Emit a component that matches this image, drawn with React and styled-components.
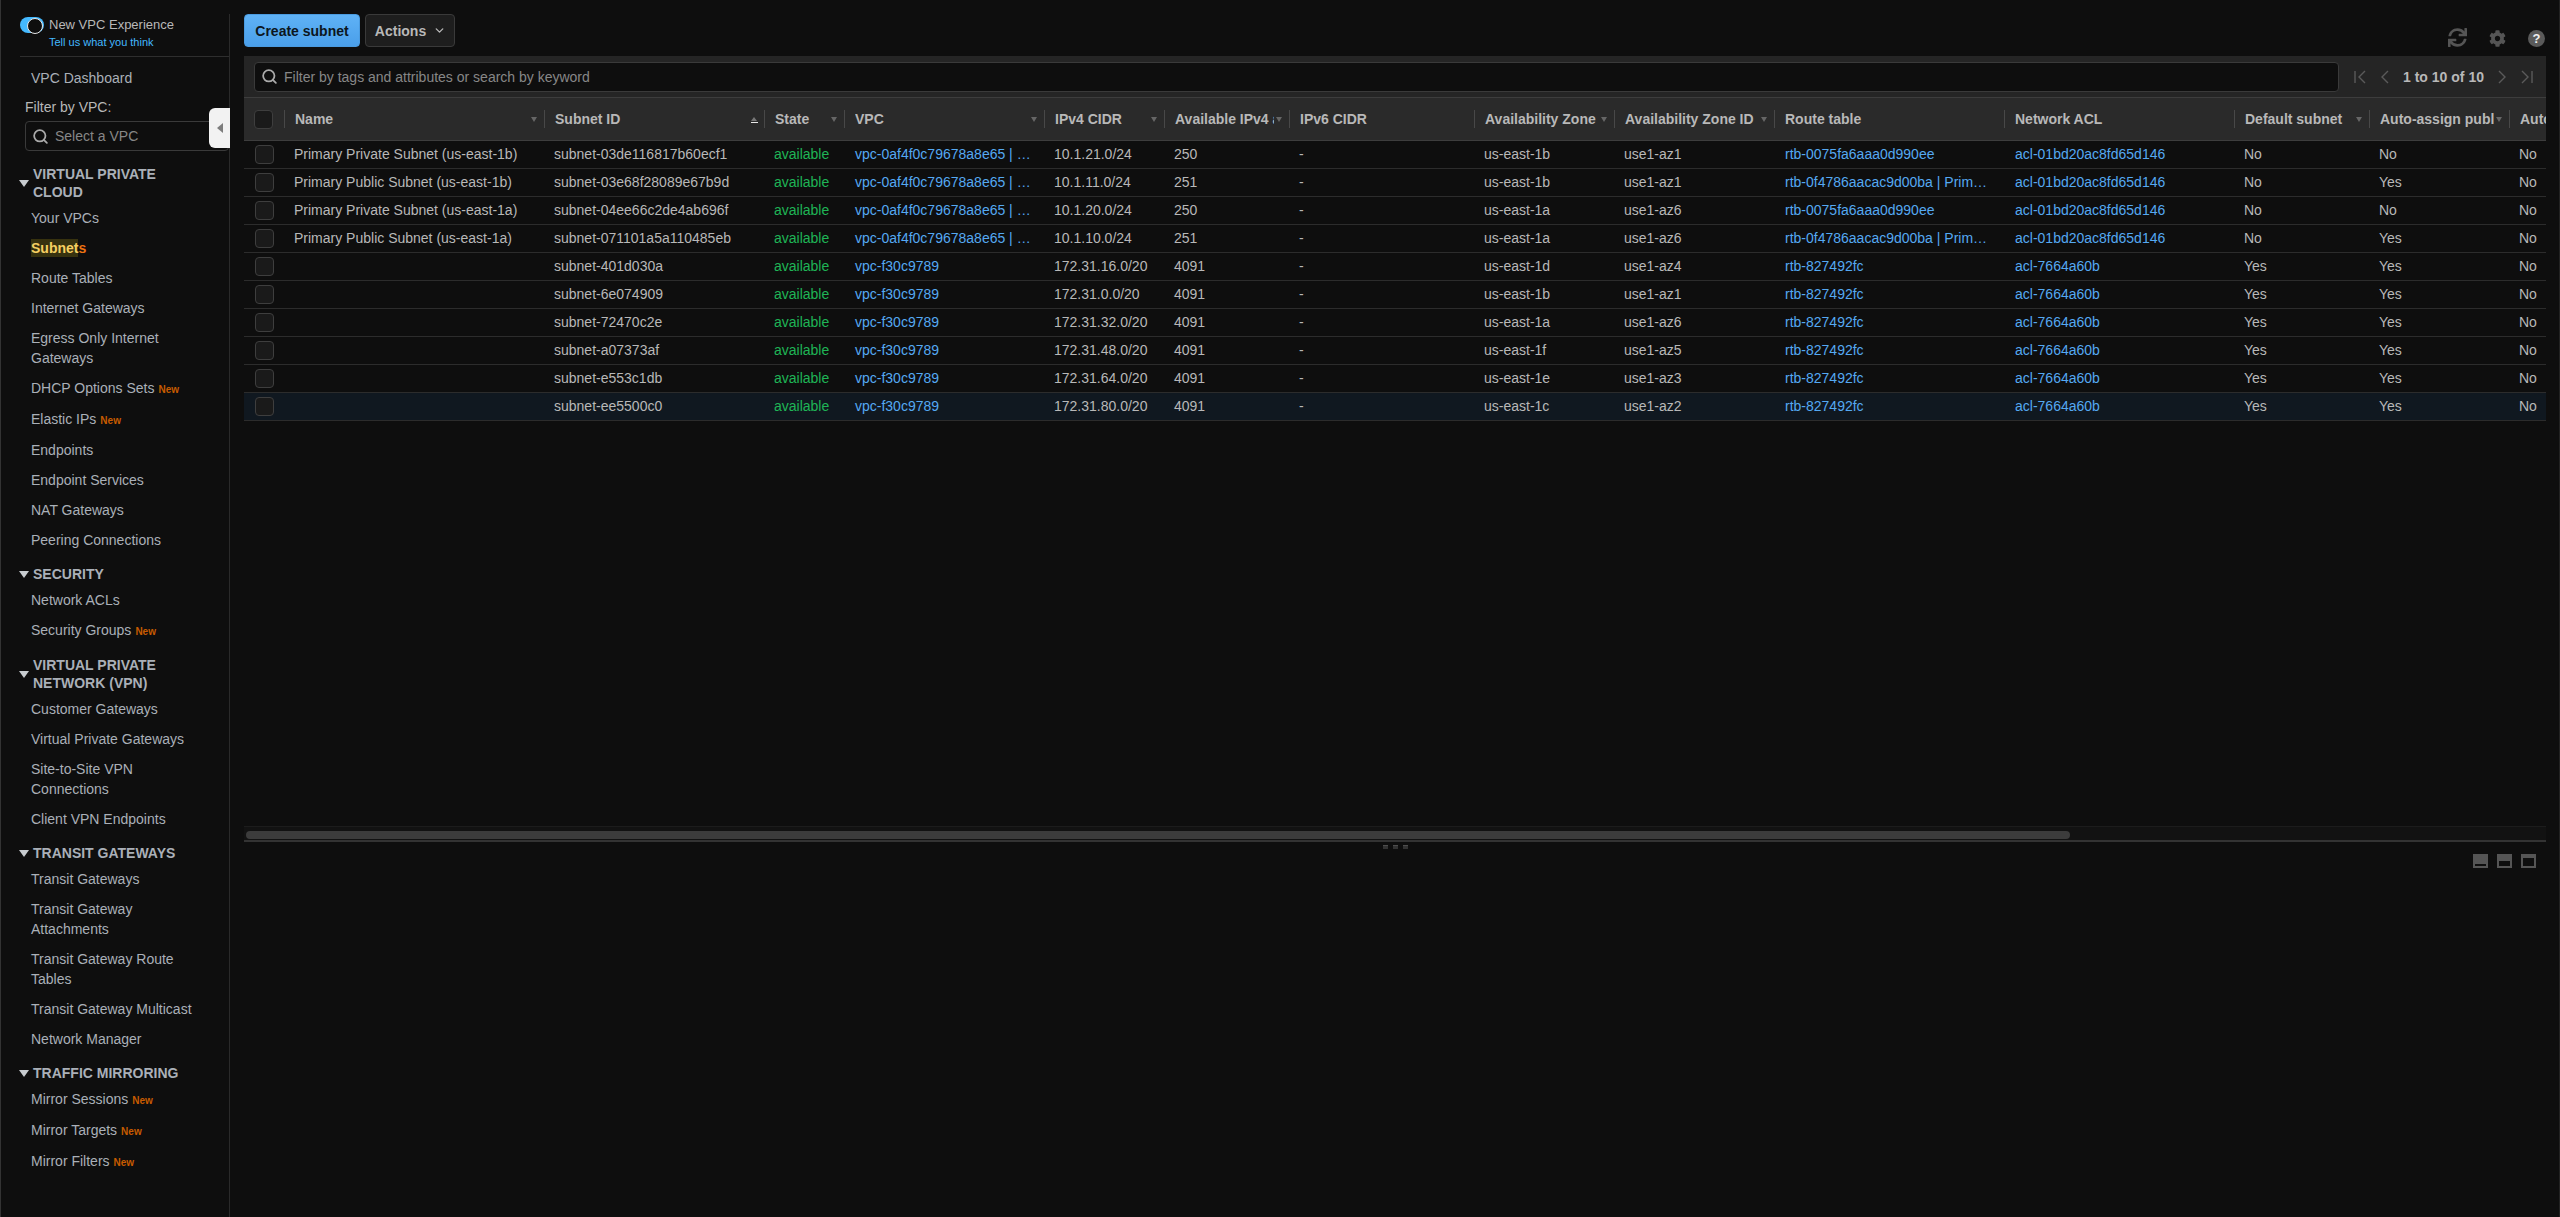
import React from 'react'
import styled, { createGlobalStyle } from 'styled-components'
import { Search, ChevronDown } from 'lucide-react'
import { FaSync, FaCog } from 'react-icons/fa'

const GlobalStyle = createGlobalStyle`
  html, body { margin: 0; height: 100%; background: #0e0e0e; overflow: hidden; }
  #root { height: 100%; }
  * { box-sizing: border-box; }
  body { font-family: "Liberation Sans", Arial, sans-serif; font-size: 14px; color: #b8b8b8; }
`

const columns = '40px 260px 220px 80px 200px 120px 125px 185px 140px 160px 230px 230px 135px 140px 200px'

const Page = styled.div`
  display: flex;
  height: 100%;
  border-left: 1px solid #333;
  border-right: 1px solid #222;
`
const Sidebar = styled.aside`
  position: relative;
  flex: 0 0 229px;
  margin-top: 14px;
  padding-left: 19px;
  border-right: 1px solid #2a2a2a;
`
const ToggleRow = styled.div`
  height: 43px;
  display: flex;
  gap: 5px;
  padding-top: 3px;
  margin-bottom: 6px;
  border-bottom: 1px solid #2e2e2e;
`
const Toggle = styled.div`
  width: 24px;
  height: 16px;
  border-radius: 8px;
  background: #44b9ff;
  position: relative;
  &::after {
    content: '';
    position: absolute;
    right: 1px;
    top: 1px;
    width: 14px;
    height: 14px;
    border: 1px solid #e8e8e8;
    border-radius: 50%;
    background: #0e0e0e;
  }
`
const ToggleText = styled.div`
  font-size: 13px;
  line-height: 15px;
  color: #b8b8b8;
`
const TellUs = styled.a`
  display: block;
  font-size: 11px;
  line-height: 13px;
  margin-top: 4px;
  color: #44b9ff;
`
const NavItem = styled.div`
  width: 182px;
  padding: ${p => (p.$isNew ? '5px 0 6px 11px' : '5px 0 5px 11px')};
  line-height: 20px;
  color: #aab0b8;
  font-weight: ${p => (p.$active ? 700 : 400)};
`
const NewBadge = styled.span`
  font-size: 10px;
  line-height: 1;
  font-weight: 700;
  color: #c75b00;
  margin-left: 4px;
`
const Highlight = styled.span`
  background: #37320f;
  color: #f5cf62;
  padding: 1px 0;
`
const ActiveEnd = styled.span`
  color: #ec7211;
`
const FilterLabel = styled.div`
  margin: 4px 0 4px 5px;
  line-height: 20px;
  color: #b8b8b8;
`
const VpcSelect = styled.div`
  margin-left: 5px;
  height: 30px;
  display: flex;
  align-items: center;
  gap: 6px;
  padding-left: 6px;
  border: 1px solid #3a3a3a;
  border-radius: 4px;
  color: #878787;
`
const Section = styled.div`
  margin-top: ${p => p.$top || 10}px;
`
const SectionHead = styled.div`
  display: flex;
  align-items: center;
  gap: 4px;
  margin-bottom: 2px;
  line-height: 18px;
  font-weight: 700;
  color: #aab0b8;
  width: 170px;
  text-transform: uppercase;
`
const Caret = styled.span`
  flex: none;
  width: 0;
  height: 0;
  margin-left: -1px;
  border-left: 5px solid transparent;
  border-right: 5px solid transparent;
  border-top: 7px solid #c8ccd0;
`
const CollapseButton = styled.div`
  position: absolute;
  right: -1px;
  top: 94px;
  width: 21px;
  height: 40px;
  display: flex;
  align-items: center;
  justify-content: center;
  background: #f2f2f2;
  border-radius: 6px 0 0 6px;
  &::after {
    content: '';
    border-top: 5px solid transparent;
    border-bottom: 5px solid transparent;
    border-right: 6px solid #7d7d7d;
  }
`
const Main = styled.main`
  flex: 1;
  min-width: 0;
  padding: 14px 13px 0 14px;
  display: flex;
  flex-direction: column;
`
const Toolbar = styled.div`
  display: flex;
  align-items: stretch;
  gap: 5px;
  height: 33px;
  margin-bottom: 9px;
`
const PrimaryButton = styled.button`
  width: 116px;
  border: 1px solid #4a9be0;
  border-radius: 4px;
  background: linear-gradient(#5fb2f6, #4a9fea);
  color: #0c1620;
  font: 700 14px "Liberation Sans", Arial, sans-serif;
  padding: 0;
`
const ActionsButton = styled.button`
  width: 90px;
  display: flex;
  align-items: center;
  justify-content: center;
  gap: 7px;
  padding: 0 0 0 1px;
  border: 1px solid #3a3a3a;
  border-radius: 4px;
  background: #1e1e1e;
  color: #b8b8b8;
  font: 700 14px "Liberation Sans", Arial, sans-serif;
`
const ToolIcons = styled.div`
  margin-left: auto;
  display: flex;
  align-items: flex-end;
  gap: 22px;
  padding-right: 1px;
  color: #555;
`
const HelpIcon = styled.span`
  width: 17px;
  height: 17px;
  border-radius: 50%;
  background: #5a5a5a;
  color: #eee;
  font-size: 13px;
  font-weight: 700;
  line-height: 17px;
  text-align: center;
`
const Panel = styled.section`
  flex: 0 0 786px;
  display: flex;
  flex-direction: column;
  overflow: hidden;
`
const FilterBar = styled.div`
  flex: none;
  height: 42px;
  display: flex;
  align-items: center;
  padding: 0 13px 0 10px;
  background: #252525;
  border-bottom: 1px solid #3d3d3d;
`
const FilterInput = styled.div`
  flex: 0 0 2085px;
  height: 30px;
  display: flex;
  align-items: center;
  gap: 6px;
  padding-left: 6px;
  background: #0e0e0e;
  border: 1px solid #3a3a3a;
  border-radius: 4px;
  color: #878787;
`
const Pager = styled.div`
  flex: 1;
  display: flex;
  align-items: center;
  justify-content: space-between;
  padding-left: 15px;
  color: #5a5a5a;
`
const PagerText = styled.span`
  font-weight: 700;
  color: #b8b8b8;
`
const TableArea = styled.div`
  flex: 1;
  overflow: hidden;
`
const HeadRow = styled.div`
  display: grid;
  grid-template-columns: ${columns};
  align-items: center;
  height: 43px;
  background: #2a2a2a;
  border-bottom: 1px solid #3d3d3d;
`
const HeadCell = styled.div`
  display: flex;
  align-items: center;
  height: 18px;
  padding: 0 7px 0 10px;
  border-left: 1px solid #484848;
  font-weight: 700;
  color: #b8b8b8;
  white-space: nowrap;
`
const HeadLabel = styled.span`
  flex: 1;
  min-width: 0;
  overflow: hidden;
`
const SortMark = styled.span`
  flex: none;
  position: relative;
  width: 0;
  height: 0;
  margin-left: 2px;
  border-left: 3.5px solid transparent;
  border-right: 3.5px solid transparent;
  ${p => (p.$asc ? 'border-bottom: 4px solid #777;' : 'border-top: 5px solid #666;')}
  ${p => p.$asc && `
    &::after {
      content: '';
      position: absolute;
      left: -3.5px;
      top: 5px;
      width: 7px;
      height: 1px;
      background: #e8e8e8;
    }
  `}
`
const Row = styled.div`
  display: grid;
  grid-template-columns: ${columns};
  align-items: center;
  height: 28px;
  border-bottom: 1px solid #2c2c2c;
  background: ${p => (p.$selected ? '#101820' : 'transparent')};
`
const Cell = styled.div`
  padding: 0 11px 1px 10px;
  white-space: nowrap;
  overflow: hidden;
  text-overflow: ellipsis;
  color: ${p => p.$color || '#b8b8b8'};
`
const LinkCell = styled(Cell)`
  padding-left: 11px;
  color: #55a9f2;
`
const Checkbox = styled.span`
  display: block;
  width: 19px;
  height: 19px;
  margin-left: ${p => (p.$head ? 10 : 11)}px;
  background: #1a1a1a;
  border: 1px solid #3e3e3e;
  border-radius: 4px;
`
const ScrollTrack = styled.div`
  flex: none;
  height: 16px;
  padding: 4px 2px;
  background: #121212;
  border-top: 1px solid #1c1c1c;
  border-bottom: 2px solid #333;
`
const ScrollThumb = styled.div`
  width: 1824px;
  height: 8px;
  border-radius: 4px;
  background: #3c3c3c;
`
const ResizeDots = styled.div`
  height: 10px;
  margin-bottom: 2px;
  display: flex;
  justify-content: center;
  align-items: center;
  gap: 5px;
`
const Dot = styled.span`
  width: 5px;
  height: 4px;
  background: #333;
  border-top: 1px solid #4d4d4d;
`
const PaneButtons = styled.div`
  display: flex;
  justify-content: flex-end;
  gap: 9px;
  padding-right: 10px;
`
const PaneButton = styled.span`
  width: 15px;
  height: 14px;
  padding: 0 2px 2px;
  display: flex;
  align-items: flex-end;
  background: #555;
  &::after {
    content: '';
    flex: 1;
    height: ${p => p.$fill}px;
    background: #0e0e0e;
  }
`

const navGroups = [
  {
    title: 'Virtual Private Cloud',
    top: 14,
    items: [
      { label: 'Your VPCs' },
      { label: 'Subnets', active: true },
      { label: 'Route Tables' },
      { label: 'Internet Gateways' },
      { label: 'Egress Only Internet Gateways' },
      { label: 'DHCP Options Sets', isNew: true },
      { label: 'Elastic IPs', isNew: true },
      { label: 'Endpoints' },
      { label: 'Endpoint Services' },
      { label: 'NAT Gateways' },
      { label: 'Peering Connections' },
    ],
  },
  {
    title: 'Security',
    items: [
      { label: 'Network ACLs' },
      { label: 'Security Groups', isNew: true },
    ],
  },
  {
    title: 'Virtual Private Network (VPN)',
    items: [
      { label: 'Customer Gateways' },
      { label: 'Virtual Private Gateways' },
      { label: 'Site-to-Site VPN Connections' },
      { label: 'Client VPN Endpoints' },
    ],
  },
  {
    title: 'Transit Gateways',
    items: [
      { label: 'Transit Gateways' },
      { label: 'Transit Gateway Attachments' },
      { label: 'Transit Gateway Route Tables' },
      { label: 'Transit Gateway Multicast' },
      { label: 'Network Manager' },
    ],
  },
  {
    title: 'Traffic Mirroring',
    items: [
      { label: 'Mirror Sessions', isNew: true },
      { label: 'Mirror Targets', isNew: true },
      { label: 'Mirror Filters', isNew: true },
    ],
  },
]

const headers = [
  'Name', 'Subnet ID', 'State', 'VPC', 'IPv4 CIDR', 'Available IPv4 addresses', 'IPv6 CIDR',
  'Availability Zone', 'Availability Zone ID', 'Route table', 'Network ACL', 'Default subnet',
  'Auto-assign public IPv4 address', 'Auto-assign customer-owned IPv4 address',
]
const noSort = ['IPv6 CIDR', 'Route table', 'Network ACL']

const mainVpc = 'vpc-0af4f0c79678a8e65 | Primary VPC'
const rtbPrivate = 'rtb-0075fa6aaa0d990ee'
const rtbPublic = 'rtb-0f4786aacac9d00ba | Primary Public Route Table'
const aclMain = 'acl-01bd20ac8fd65d146'

const subnets = [
  ['Primary Private Subnet (us-east-1b)', 'subnet-03de116817b60ecf1', mainVpc, '10.1.21.0/24', '250', 'us-east-1b', 'use1-az1', rtbPrivate, aclMain, 'No', 'No'],
  ['Primary Public Subnet (us-east-1b)', 'subnet-03e68f28089e67b9d', mainVpc, '10.1.11.0/24', '251', 'us-east-1b', 'use1-az1', rtbPublic, aclMain, 'No', 'Yes'],
  ['Primary Private Subnet (us-east-1a)', 'subnet-04ee66c2de4ab696f', mainVpc, '10.1.20.0/24', '250', 'us-east-1a', 'use1-az6', rtbPrivate, aclMain, 'No', 'No'],
  ['Primary Public Subnet (us-east-1a)', 'subnet-071101a5a110485eb', mainVpc, '10.1.10.0/24', '251', 'us-east-1a', 'use1-az6', rtbPublic, aclMain, 'No', 'Yes'],
  ['', 'subnet-401d030a', 'vpc-f30c9789', '172.31.16.0/20', '4091', 'us-east-1d', 'use1-az4', 'rtb-827492fc', 'acl-7664a60b', 'Yes', 'Yes'],
  ['', 'subnet-6e074909', 'vpc-f30c9789', '172.31.0.0/20', '4091', 'us-east-1b', 'use1-az1', 'rtb-827492fc', 'acl-7664a60b', 'Yes', 'Yes'],
  ['', 'subnet-72470c2e', 'vpc-f30c9789', '172.31.32.0/20', '4091', 'us-east-1a', 'use1-az6', 'rtb-827492fc', 'acl-7664a60b', 'Yes', 'Yes'],
  ['', 'subnet-a07373af', 'vpc-f30c9789', '172.31.48.0/20', '4091', 'us-east-1f', 'use1-az5', 'rtb-827492fc', 'acl-7664a60b', 'Yes', 'Yes'],
  ['', 'subnet-e553c1db', 'vpc-f30c9789', '172.31.64.0/20', '4091', 'us-east-1e', 'use1-az3', 'rtb-827492fc', 'acl-7664a60b', 'Yes', 'Yes'],
  ['', 'subnet-ee5500c0', 'vpc-f30c9789', '172.31.80.0/20', '4091', 'us-east-1c', 'use1-az2', 'rtb-827492fc', 'acl-7664a60b', 'Yes', 'Yes'],
]

const GREEN = '#1fb556'

const PagerIcon = ({ d }) => (
  <svg width="12" height="14" viewBox="0 0 12 14" fill="none" stroke="currentColor" strokeWidth="1.4">
    <path d={d} />
  </svg>
)

const App = () => {
  return (
    <Page>
      <GlobalStyle />
      <Sidebar>
        <ToggleRow>
          <Toggle />
          <ToggleText>
            New VPC Experience
            <TellUs>Tell us what you think</TellUs>
          </ToggleText>
        </ToggleRow>
        <NavItem>VPC Dashboard</NavItem>
        <FilterLabel>Filter by VPC:</FilterLabel>
        <VpcSelect>
          <Search size={17} strokeWidth={2.5} color="#aaa" />
          Select a VPC
        </VpcSelect>
        {navGroups.map(group => (
          <Section key={group.title} $top={group.top}>
            <SectionHead>
              <Caret />
              <span>{group.title}</span>
            </SectionHead>
            {group.items.map(item => (
              <NavItem key={item.label} $isNew={item.isNew} $active={item.active}>
                {item.active ? (
                  <>
                    <Highlight>Subnet</Highlight>
                    <ActiveEnd>s</ActiveEnd>
                  </>
                ) : item.label}
                {item.isNew && <NewBadge>New</NewBadge>}
              </NavItem>
            ))}
          </Section>
        ))}
        <CollapseButton />
      </Sidebar>
      <Main>
        <Toolbar>
          <PrimaryButton>Create subnet</PrimaryButton>
          <ActionsButton>
            Actions
            <ChevronDown size={13} strokeWidth={2.5} />
          </ActionsButton>
          <ToolIcons>
            <FaSync size={19} />
            <FaCog size={17} />
            <HelpIcon>?</HelpIcon>
          </ToolIcons>
        </Toolbar>
        <Panel>
          <FilterBar>
            <FilterInput>
              <Search size={17} strokeWidth={2.5} color="#aaa" />
              Filter by tags and attributes or search by keyword
            </FilterInput>
            <Pager>
              <PagerIcon d="M1 1v12M11 1 5 7l6 6" />
              <PagerIcon d="M9 1 3 7l6 6" />
              <PagerText>1 to 10 of 10</PagerText>
              <PagerIcon d="M3 1l6 6-6 6" />
              <PagerIcon d="M1 1l6 6-6 6M11 1v12" />
            </Pager>
          </FilterBar>
          <TableArea>
            <HeadRow>
              <Checkbox $head />
              {headers.map(label => (
                <HeadCell key={label}>
                  <HeadLabel>{label}</HeadLabel>
                  {!noSort.includes(label) && <SortMark $asc={label === 'Subnet ID'} />}
                </HeadCell>
              ))}
            </HeadRow>
            {subnets.map((s, i) => (
              <Row key={s[1]} $selected={i === subnets.length - 1}>
                <Checkbox />
                <Cell>{s[0]}</Cell>
                <Cell>{s[1]}</Cell>
                <Cell $color={GREEN}>available</Cell>
                <LinkCell>{s[2]}</LinkCell>
                <Cell>{s[3]}</Cell>
                <Cell>{s[4]}</Cell>
                <Cell>-</Cell>
                <Cell>{s[5]}</Cell>
                <Cell>{s[6]}</Cell>
                <LinkCell>{s[7]}</LinkCell>
                <LinkCell>{s[8]}</LinkCell>
                <Cell>{s[9]}</Cell>
                <Cell>{s[10]}</Cell>
                <Cell>No</Cell>
              </Row>
            ))}
          </TableArea>
          <ScrollTrack>
            <ScrollThumb />
          </ScrollTrack>
        </Panel>
        <ResizeDots>
          <Dot />
          <Dot />
          <Dot />
        </ResizeDots>
        <PaneButtons>
          <PaneButton $fill={2} />
          <PaneButton $fill={5} />
          <PaneButton $fill={8} />
        </PaneButtons>
      </Main>
    </Page>
  )
}

export default App
